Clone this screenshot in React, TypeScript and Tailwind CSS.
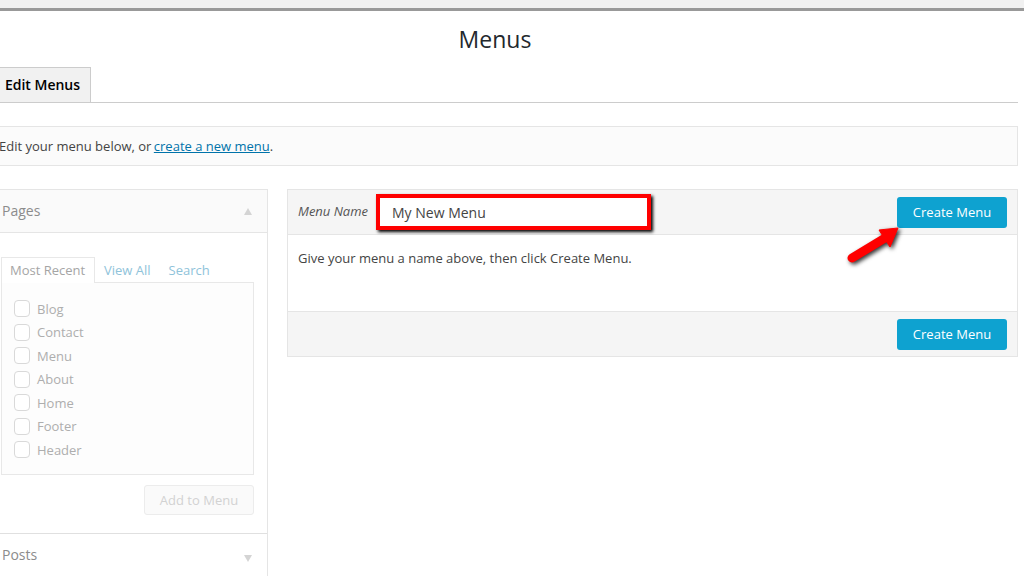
const pageItems = ["Blog", "Contact", "Menu", "About", "Home", "Footer", "Header"]

function CreateButton({ top }: { top?: boolean }) {
  return (
    <button className={top ? "h-[31px] w-[110px] rounded-[3px] bg-[#0ea2d0] pt-[2px] text-[13px] text-white" : "h-[31px] w-[110px] rounded-[3px] bg-[#0ea2d0] pt-[2px] text-[13px] text-white"}>
      Create Menu
    </button>
  )
}

function PagesPanel() {
  return (
    <div className="h-[400px] w-[278px] shrink-0 border border-[#e5e5e5] text-[#aeaeae]">
      <div className="flex h-[43px] items-center justify-between border-b border-[#e5e5e5] bg-[#fafafa] pl-[11px] pr-[15px]">
        <span className="-mt-[2px] text-[14px] font-medium text-[#8c8c8c]">Pages</span>
        <span className="h-0 w-0 border-x-[4px] border-b-[7px] border-x-transparent border-b-[#d4d4d4]" />
      </div>
      <div className="px-[10px] pt-[24px]">
        <div className="flex h-[26px] text-[13px]">
          <span className="z-10 h-[26px] w-[94px] border border-b-0 border-[#e8e8e8] bg-white pl-[8px] pt-[3px] text-[#a5a5a5]">
            Most Recent
          </span>
          <span className="pl-[9px] pt-[4px] text-[#8fc3da]">View All</span>
          <span className="pl-[18px] pt-[4px] text-[#8fc3da]">Search</span>
        </div>
        <div className="-mt-px h-[193px] w-[253px] border border-[#e8e8e8] bg-[#fdfdfd] pl-[12px] pt-[14.75px]">
          {pageItems.map((item) => (
            <div key={item} className="flex h-[23.5px] items-center gap-[7px] text-[13px]">
              <span className="-mt-[2px] h-[17px] w-[16px] rounded-[4px] border border-[#d9d9d9] bg-white" />
              <span>{item}</span>
            </div>
          ))}
        </div>
        <div className="mt-[10px] flex w-[253px] justify-end">
          <button className="h-[30px] w-[110px] rounded-[3px] border border-[#ececec] bg-[#fafafa] pt-[2px] text-[13px] text-[#d2d2d2]">
            Add to Menu
          </button>
        </div>
      </div>
      <div className="mt-[18px] flex h-[44px] items-center justify-between border-t border-[#e0e0e0] pl-[11px] pr-[15px]">
        <span className="-mt-[2px] text-[14px] font-medium text-[#8c8c8c]">Posts</span>
        <span className="mt-[5px] h-0 w-0 border-x-[4px] border-t-[7px] border-x-transparent border-t-[#d4d4d4]" />
      </div>
    </div>
  )
}

function EditorPanel() {
  return (
    <div className="relative h-[168px] flex-1 border border-[#e5e5e5] text-[#444]">
      <div className="flex h-[45px] items-center justify-between border-b border-[#e5e5e5] bg-[#f5f5f5] pl-[10px] pr-[10px]">
        <div className="flex items-center">
          <span className="w-[78px] text-[13px] italic text-[#555]">Menu Name</span>
          <div className="flex h-[36px] w-[275px] items-center border-[4px] border-[#ff0000] bg-white pl-[12px] text-[14px] shadow-[2px_2px_3px_rgba(0,0,0,1)]">
            My New Menu
          </div>
        </div>
        <CreateButton top />
      </div>
      <div className="h-[76px] pl-[10px] pt-[14px] text-[13px]">Give your menu a name above, then click Create Menu.</div>
      <div className="flex h-[45px] items-center justify-end border-t border-[#e5e5e5] bg-[#f5f5f5] pr-[10px]">
        <CreateButton />
      </div>
      <svg
        className="absolute left-[559px] top-[34px] drop-shadow-[2px_2px_2px_rgba(0,0,0,0.8)]"
        width="56"
        height="44"
        viewBox="0 0 56 44"
      >
        <path d="M5 34 L38 14" stroke="#f00" strokeWidth="9" strokeLinecap="round" fill="none" />
        <path d="M51 4 L32 6 L43 23 Z" fill="#f00" stroke="#f00" strokeLinejoin="round" />
      </svg>
    </div>
  )
}

export default function App() {
  return (
    <div className="h-[576px] w-[1024px] overflow-hidden bg-white font-['Open_Sans',sans-serif]">
      <div className="h-[11px] border-b-[3px] border-[#999] bg-[#f1f1f1]" />
      <div className="-ml-[28px] w-[1046px]">
        <h1 className="mt-[12px] text-center text-[23px] leading-[32px] text-[#23282d]">Menus</h1>
        <div className="mt-[12px] h-[36px] border-b border-[#ccc] pl-[20px]">
          <div className="flex h-[36px] w-[99px] items-center justify-center border border-[#ccc] bg-[#f1f1f1] pb-[2px] pl-[2px] text-[14px] font-semibold text-[#000]">
            Edit Menus
          </div>
        </div>
        <div className="mt-[23px] flex h-[40px] items-center border border-[#e5e5e5] bg-[#fbfbfb] pl-[26px] pt-[2px] text-[13px] text-[#444]">
          <span>
            Edit your menu below, or{" "}
            <a className="-ml-[1px] text-[#0073aa] underline">create a new menu</a>.
          </span>
        </div>
        <div className="mt-[23px] flex items-start gap-[19px] pl-[18px]">
          <PagesPanel />
          <EditorPanel />
        </div>
      </div>
    </div>
  )
}
